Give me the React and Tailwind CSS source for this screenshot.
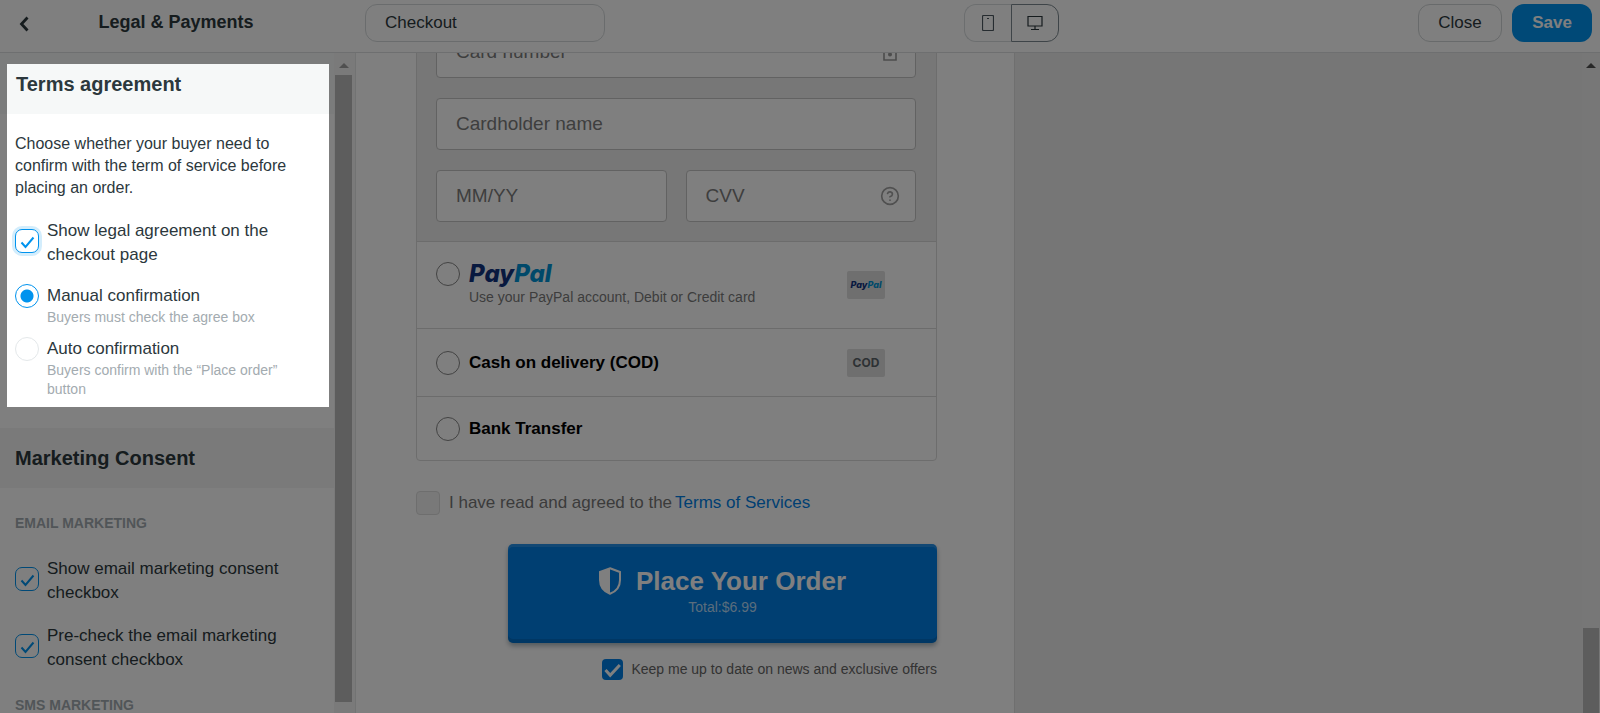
import React from 'react';
import { CircleHelp } from 'lucide-react';

const Tick = ({ className }) => (
  <svg
    viewBox="0 0 24 24"
    fill="none"
    stroke="currentColor"
    strokeWidth="2"
    className={`pointer-events-none absolute inset-0 h-full w-full ${className}`}
  >
    <path d="M6.5 13.5 L10.5 18 L18.5 8.5" />
  </svg>
);

const CheckField = ({ label, focused, className }) => (
  <label className={`flex items-start gap-2 text-[17px] leading-6 ${className}`}>
    <span className="relative mt-[10px] h-6 w-6 shrink-0">
      <input
        type="checkbox"
        defaultChecked
        className={`block h-6 w-6 appearance-none rounded-[7px] border border-[#0093ee] bg-white ${
          focused ? 'ring-3 ring-[#d3edfc]' : ''
        }`}
      />
      <Tick className="text-[#0093ee]" />
    </span>
    <span>{label}</span>
  </label>
);

const RadioField = ({ label, hint, checked, className }) => (
  <label className={`flex items-start gap-2 ${className}`}>
    <input
      type="radio"
      name="confirmation"
      defaultChecked={checked}
      className="h-6 w-6 shrink-0 appearance-none rounded-full border border-[#e4e8ea] bg-white checked:border-[#0093ee] checked:bg-[radial-gradient(circle,#0093ee_6px,#fff_7px)]"
    />
    <span>
      <span className="block text-[17px] leading-6">{label}</span>
      <span className="block text-sm leading-[19px] text-[#a3abb0]">{hint}</span>
    </span>
  </label>
);

const Arrow = ({ className }) => (
  <svg viewBox="0 0 10 5" className={`mx-auto mt-[10px] h-[5px] w-[10px] ${className}`}>
    <path d="M5 0 L10 5 L0 5 Z" fill="currentColor" />
  </svg>
);

const Header = () => (
  <header className="flex h-[53px] shrink-0 items-start border-b border-[#dcdfe0] bg-white pr-2 pt-1">
    <div className="flex h-9 w-[365px] shrink-0 items-center pl-[19px]">
      <button type="button" aria-label="Back" className="w-3">
        <svg viewBox="0 0 10 16" fill="none" stroke="currentColor" strokeWidth="2.8" className="mt-1 h-4 w-[10px]">
          <path d="M8.5 1.5 L2.5 8 L8.5 14.5" />
        </svg>
      </button>
      <h1 className="flex-1 pr-[44px] text-center text-lg font-bold leading-6">Legal &amp; Payments</h1>
    </div>
    <div className="flex flex-1 items-center justify-between">
      <input
        type="text"
        aria-label="Page"
        defaultValue="Checkout"
        className="h-[38px] w-[240px] rounded-xl border border-[#d5d9db] bg-white px-[19px] text-[17px]"
      />
      <div className="flex h-[38px]">
        <button
          type="button"
          aria-label="Mobile"
          className="flex w-[47px] items-center justify-center rounded-l-xl border border-r-0 border-[#d9dddf] text-[#4d5960]"
        >
          <svg viewBox="0 0 12 16" fill="none" stroke="currentColor" className="h-4 w-3">
            <rect x="0.5" y="0.5" width="11" height="15" rx="1" strokeWidth="1.2" />
            <path d="M5 3.5 H7" />
          </svg>
        </button>
        <button
          type="button"
          aria-label="Desktop"
          className="flex w-12 items-center justify-center rounded-r-xl border border-[#7d8990] text-[#2b363b]"
        >
          <svg viewBox="0 0 16 16" fill="none" stroke="currentColor" className="h-4 w-4">
            <path d="M1 1.5 H15 V11 H1 Z M4 14.5 H12 M8 11 V14.5" strokeWidth="1.2" />
          </svg>
        </button>
      </div>
      <div className="flex gap-[10px] text-[17px]">
        <button type="button" className="h-[38px] w-[84px] rounded-xl border border-[#d0d4d6]">Close</button>
        <button type="button" className="h-[38px] w-20 rounded-xl bg-[#0093ee] font-bold text-white">Save</button>
      </div>
    </div>
  </header>
);

const Sidebar = () => (
  <aside className="flex w-[356px] shrink-0 border-r border-[#e4e6e7] bg-white">
    <div className="min-w-0 flex-1 overflow-hidden">
      <h2 className="flex h-[61px] items-center bg-[#f6f8f8] pl-4 text-xl font-bold">Terms agreement</h2>
      <div className="pl-[15px] pr-10">
        <p className="mt-[19px] text-base leading-[22px]">
          Choose whether your buyer need to confirm with the term of service before placing an order.
        </p>
        <CheckField label="Show legal agreement on the checkout page" focused className="mt-5" />
        <RadioField
          label="Manual confirmation"
          hint="Buyers must check the agree box"
          checked
          className="mt-[17px]"
        />
        <RadioField
          label="Auto confirmation"
          hint="Buyers confirm with the “Place order” button"
          className="mt-[10px]"
        />
      </div>
      <h2 className="mt-[29px] flex h-[60px] items-center bg-[#f4f5f5] pl-[15px] text-xl font-bold">
        Marketing Consent
      </h2>
      <div className="pl-[15px] pr-12">
        <h3 className="mt-[25px] text-sm font-bold leading-5 text-[#a3abb0]">EMAIL MARKETING</h3>
        <CheckField label="Show email marketing consent checkbox" className="mt-6" />
        <CheckField label="Pre-check the email marketing consent checkbox" className="mt-[19px]" />
        <h3 className="mt-[23px] text-sm font-bold leading-5 text-[#a3abb0]">SMS MARKETING</h3>
      </div>
    </div>
    <div className="flex w-[21px] flex-col bg-[#f4f4f4] pb-[11px] pr-[2px]">
      <Arrow className="text-[#a0a0a0]" />
      <div className="mx-auto mt-[7px] w-[17px] flex-1 bg-[#bababa]" />
    </div>
  </aside>
);

const inputStyle =
  'h-[52px] w-full rounded border border-[#c4c4c4] bg-white px-[19px] text-[19px] placeholder:text-[#7c7c7c] placeholder:opacity-100';

const PayPalLogo = ({ className }) => (
  <span className={`font-['Inter',sans-serif] font-extrabold italic [font-feature-settings:'cv11'] ${className}`}>
    <span className="text-[#10327f]">Pay</span>
    <span className="text-[#0093d5]">Pal</span>
  </span>
);

const PaymentOption = ({ id, badge, children, className }) => (
  <div className={`flex items-center border-t border-[#d9d9d9] pl-[19px] pr-[51px] ${className}`}>
    <label htmlFor={id} className="flex flex-1 items-start gap-[9px] text-[17px] font-bold leading-6 text-black">
      <input
        type="radio"
        id={id}
        name="payment"
        className="h-6 w-6 shrink-0 appearance-none rounded-full border border-[#868686] bg-white"
      />
      <span>{children}</span>
    </label>
    {badge && (
      <span className="flex h-7 w-[38px] items-center justify-center rounded-xs bg-[#dedede]">{badge}</span>
    )}
  </div>
);

const Checkout = () => (
  <section className="w-[659px] shrink-0 overflow-hidden border-r border-[#dedede] bg-white pl-[60px] pr-[77px]">
    <div className="-mt-[47px] rounded border border-[#dadada]">
      <div className="flex flex-col gap-5 bg-[#eeeeee] py-[19px] pl-[19px] pr-5">
        <div className="relative">
          <input type="text" aria-label="Card number" placeholder="Card number" className={inputStyle} />
          <svg
            viewBox="0 0 14 18"
            fill="none"
            stroke="currentColor"
            strokeWidth="1.6"
            className="absolute right-[19px] top-[17px] h-[18px] w-[14px] text-[#999]"
          >
            <path d="M1 6 H13 V17 H1 Z M4 6 V3 a3 2.5 0 0 1 6 0 V6" />
            <circle cx="7" cy="11.5" r="1.2" fill="currentColor" />
          </svg>
        </div>
        <input type="text" aria-label="Cardholder name" placeholder="Cardholder name" className={inputStyle} />
        <div className="grid grid-cols-2 gap-[19px]">
          <input type="text" aria-label="Expiry date" placeholder="MM/YY" className={inputStyle} />
          <div className="relative">
            <input type="text" aria-label="CVV" placeholder="CVV" className={inputStyle} />
            <CircleHelp strokeWidth={2} className="absolute right-4 top-4 h-5 w-5 text-[#a0a0a0]" />
          </div>
        </div>
      </div>
      <PaymentOption id="paypal" className="h-[87px]" badge={<PayPalLogo className="text-[9px] leading-4" />}>
        <PayPalLogo className="block text-2xl leading-6" />
        <span className="block text-sm font-normal leading-[22px] text-[#7a7a7a]">
          Use your PayPal account, Debit or Credit card
        </span>
      </PaymentOption>
      <PaymentOption
        id="cod"
        className="h-[68px]"
        badge={<span className="font-['Inter',sans-serif] text-xs font-bold text-[#5b6368]">COD</span>}
      >
        Cash on delivery (COD)
      </PaymentOption>
      <PaymentOption id="bank" className="h-[64px]">Bank Transfer</PaymentOption>
    </div>

    <div className="mt-[30px] flex items-center text-[17px] leading-6 text-[#777]">
      <label className="flex items-center gap-[9px]">
        <input
          type="checkbox"
          className="h-6 w-6 appearance-none rounded border border-[#dcdcdc] bg-[#f2f2f2]"
        />
        I have read and agreed to the
      </label>
      <a href="#terms" className="ml-[3px] text-[#007ee5]">Terms of Services</a>
    </div>

    <div className="mt-[29px] flex flex-col items-end">
      <button
        type="button"
        className="flex h-[99px] w-[429px] flex-col items-center rounded-[5px] bg-[#007ee5] pt-[21px] text-white shadow-[inset_0_3px_0_rgba(255,255,255,0.14),inset_0_-4px_0_rgba(0,0,0,0.12),0_3px_5px_rgba(0,40,60,0.35)]"
      >
        <span className="flex items-center gap-[15px] text-[26px] font-bold leading-8">
          <svg viewBox="0 0 22 28" className="h-7 w-[22px]">
            <path
              d="M11 1.2 L21 5 V13 C21 20 17 24.5 11 26.8 C5 24.5 1 20 1 13 V5 Z"
              fill="none"
              stroke="currentColor"
              strokeWidth="2"
            />
            <path d="M11 1.2 V26.8 C5 24.5 1 20 1 13 V5 Z" fill="currentColor" />
          </svg>
          Place Your Order
        </span>
        <span className="text-sm leading-5 text-[#b5daf8]">Total:$6.99</span>
      </button>
      <label className="mt-4 flex items-center gap-2 text-sm leading-[21px] text-[#666]">
        <span className="relative h-[21px] w-[21px]">
          <input
            type="checkbox"
            defaultChecked
            className="block h-[21px] w-[21px] appearance-none rounded bg-[#007ee5]"
          />
          <svg
            viewBox="0 0 21 21"
            fill="none"
            stroke="currentColor"
            strokeWidth="3"
            className="pointer-events-none absolute inset-0 text-white"
          >
            <path d="M3.5 11 L8.2 16.2 L17.8 6" />
          </svg>
        </span>
        Keep me up to date on news and exclusive offers
      </label>
    </div>
  </section>
);

const App = () => {
  return (
    <div className="relative flex h-screen flex-col overflow-hidden bg-white font-['Liberation_Sans',Arial,sans-serif] text-[#2c383d]">
      <Header />
      <div className="flex min-h-0 flex-1">
        <Sidebar />
        <main className="flex min-w-0 flex-1 bg-[#ececec]">
          <Checkout />
          <div className="ml-auto flex w-[18px] shrink-0 flex-col bg-[#efefef]">
            <Arrow className="text-[#505050]" />
            <div className="mx-auto mt-auto h-[85px] w-4 bg-[#bababa]" />
          </div>
        </main>
      </div>

      {/* Spotlight over the active section */}
      <div className="pointer-events-none absolute left-[7px] top-16 h-[343px] w-[322px] shadow-[0_0_0_9999px_rgba(0,0,0,0.5)]" />
    </div>
  );
};

export default App;
